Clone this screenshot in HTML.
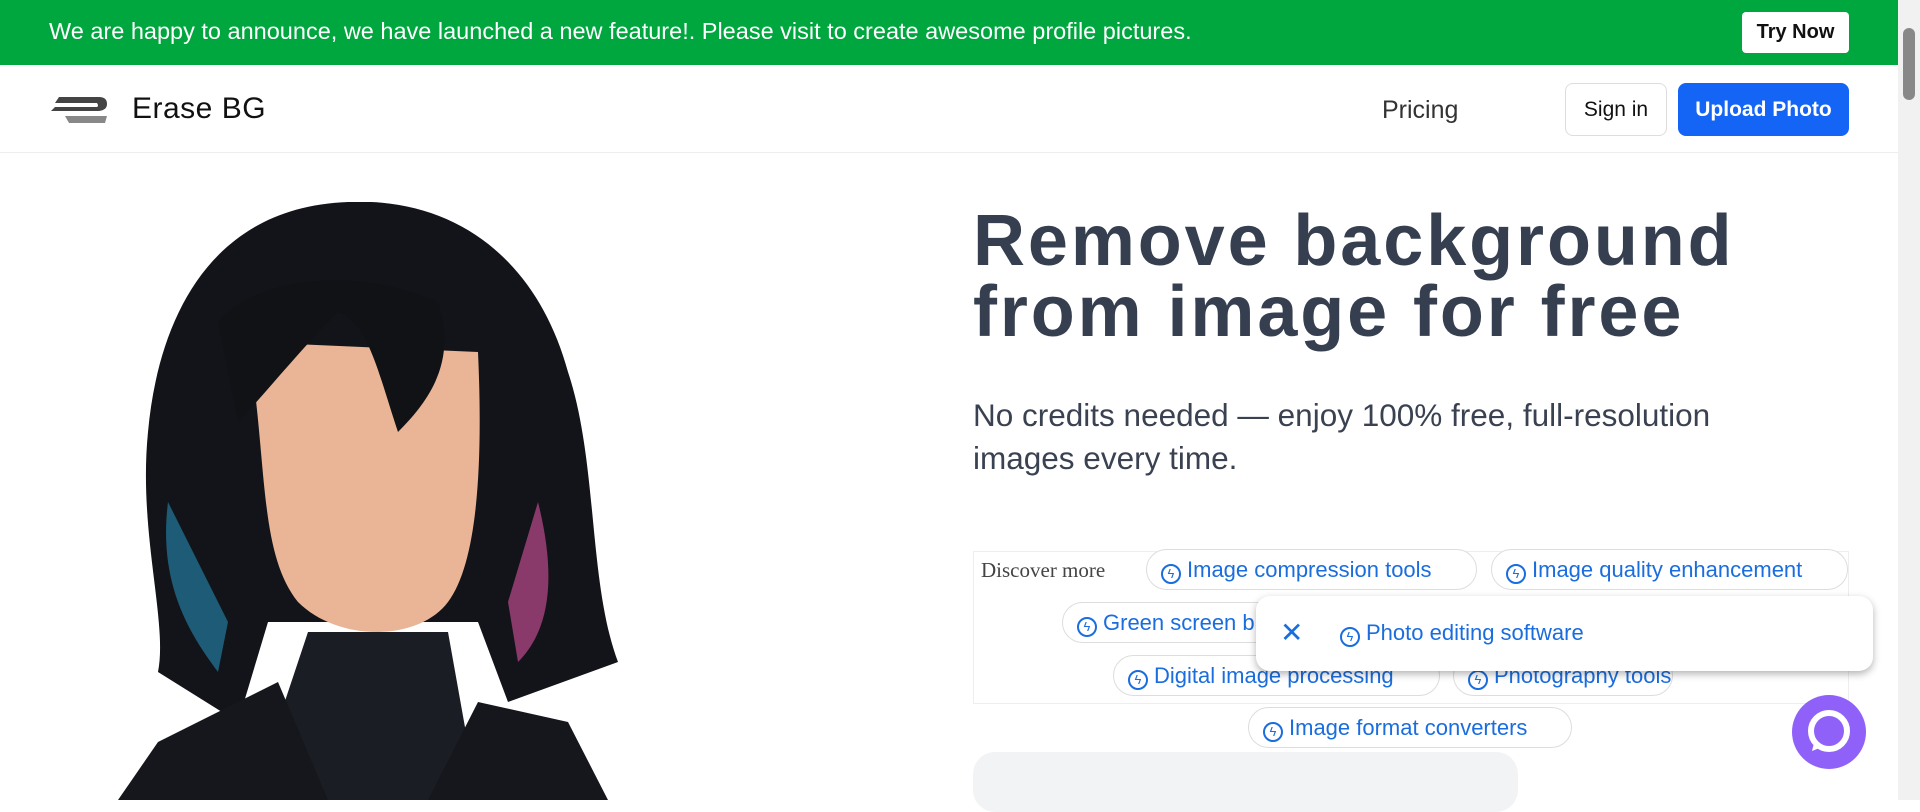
<!DOCTYPE html>
<html><head><meta charset="utf-8"><style>
*{margin:0;padding:0;box-sizing:border-box}
body{width:1920px;height:800px;overflow:hidden;background:#fff;font-family:"Liberation Sans",sans-serif;position:relative}
.banner{position:absolute;left:0;top:0;width:1898px;height:65px;background:#00a63e;color:#fff;font-size:23.5px}
.banner span{position:absolute;left:49px;top:18px}
.try{position:absolute;left:1742px;top:12px;width:107px;height:41px;background:#fff;color:#111;border-radius:4px;font-size:20px;text-align:center;line-height:41px;font-weight:bold}
.nav{position:absolute;left:0;top:65px;width:1898px;height:88px;border-bottom:1px solid #eee}
.brand{position:absolute;left:132px;top:27px;font-size:30px;color:#111;letter-spacing:0.5px}
.pricing{position:absolute;left:1382px;top:31px;font-size:25px;color:#333}
.signin{position:absolute;left:1565px;top:18px;width:102px;height:53px;border:1px solid #ddd;border-radius:8px;font-size:21px;text-align:center;line-height:51px;color:#111}
.upload{position:absolute;left:1678px;top:18px;width:171px;height:53px;background:#1464f6;border-radius:8px;font-size:21px;text-align:center;line-height:53px;color:#fff;font-weight:bold}
.sb{position:absolute;right:0;top:0;width:22px;height:800px;background:#f1f1f1}
.sb div{position:absolute;left:5px;top:28px;width:12px;height:72px;background:#888;border-radius:6px}
h1{position:absolute;left:973px;top:206px;font-size:72px;line-height:71px;color:#363f4f;font-weight:bold;letter-spacing:2.9px;white-space:nowrap}
.sub{position:absolute;left:973px;top:394px;font-size:31.5px;line-height:43px;color:#3a4252;width:800px}
.box{position:absolute;left:973px;top:551px;width:876px;height:153px;border:1px solid #eee}
.dm{position:absolute;left:981px;top:558px;font-family:"Liberation Serif",serif;font-size:21px;color:#444}
.chip{position:absolute;height:41px;border:1px solid #ddd;border-radius:21px;color:#1a6ddf;font-size:22px;line-height:39px;padding-left:14px;white-space:nowrap;background:#fff}
.chip i,.pop i{display:inline-block;width:20px;height:20px;border:2px solid #1a6ddf;border-radius:50%;vertical-align:-1px;margin-right:6px;font-style:normal;font-size:13px;line-height:16px;text-align:center}
.pop{position:absolute;left:1256px;top:596px;width:617px;height:75px;background:#fff;border-radius:14px;box-shadow:0 3px 8px rgba(0,0,0,.3);color:#1a6ddf;font-size:22px}
.card{position:absolute;left:973px;top:752px;width:545px;height:60px;background:#f2f3f5;border-radius:22px}
.chat{position:absolute;left:1792px;top:695px;width:74px;height:74px;border-radius:50%;background:#9061f9}
</style></head><body>
<div class="banner"><span>We are happy to announce, we have launched a new feature!. Please visit to create awesome profile pictures.</span><div class="try">Try Now</div></div>
<div class="nav">
<svg style="position:absolute;left:49px;top:30px" width="60" height="30"><path d="M10 2H50Q58 2 58 9Q58 15 50 16H2L6 12H48Q50 11 48 8H6Z" fill="#444"/><path d="M16 21H58L56 28H20Z" fill="#888"/></svg>
<div class="brand">Erase BG</div>
<div class="pricing">Pricing</div><div class="signin">Sign in</div><div class="upload">Upload Photo</div></div>
<svg style="position:absolute;left:98px;top:202px" width="530" height="598" viewBox="0 0 530 598">
<path d="M250 0C110 5 60 120 50 230C40 330 70 420 60 470L140 520L170 420H380L410 500L520 460C490 380 500 260 470 170C440 60 360 -5 250 0Z" fill="#121419"/>
<path d="M150 140C170 260 160 350 200 400C240 440 320 440 350 400C380 360 385 260 380 150Z" fill="#e9b596"/>
<path d="M120 120C150 80 250 60 340 100C360 160 330 200 300 230C280 170 270 120 240 110C200 150 160 200 140 220Z" fill="#101216"/>
<path d="M210 430L350 430L380 598H110L180 520Z" fill="#1a1d24"/>
<path d="M20 598L60 540L180 480L230 598Z M330 598L380 500L470 520L510 598Z" fill="#15171c"/>
<path d="M70 300C60 380 90 430 120 470L130 420Z" fill="#1e5b77"/>
<path d="M440 300C460 380 450 430 420 460L410 400Z" fill="#8a3a6a"/>
</svg>
<h1>Remove background<br>from image for free</h1>
<div class="sub">No credits needed — enjoy 100% free, full-resolution images every time.</div>
<div class="box"></div>
<div class="dm">Discover more</div>
<div class="chip" style="left:1146px;top:549px;width:331px"><i>ϟ</i>Image compression tools</div>
<div class="chip" style="left:1491px;top:549px;width:357px"><i>ϟ</i>Image quality enhancement</div>
<div class="chip" style="left:1062px;top:602px;width:230px"><i>ϟ</i>Green screen b</div>
<div class="chip" style="left:1113px;top:655px;width:327px"><i>ϟ</i>Digital image processing</div>
<div class="chip" style="left:1453px;top:655px;width:220px"><i>ϟ</i>Photography tools</div>
<div class="chip" style="left:1248px;top:707px;width:324px"><i>ϟ</i>Image format converters</div>
<div class="pop"><span style="position:absolute;left:24px;top:20px;font-size:28px">✕</span><span style="position:absolute;left:84px;top:24px"><i>ϟ</i>Photo editing software</span></div>
<div class="card"></div>
<div class="chat"><svg width="74" height="74"><circle cx="37" cy="36" r="18" fill="none" stroke="#fff" stroke-width="6"/><path d="M22 48L20 56L30 52Z" fill="#fff"/></svg></div>
<div class="sb"><div></div></div>
</body></html>
